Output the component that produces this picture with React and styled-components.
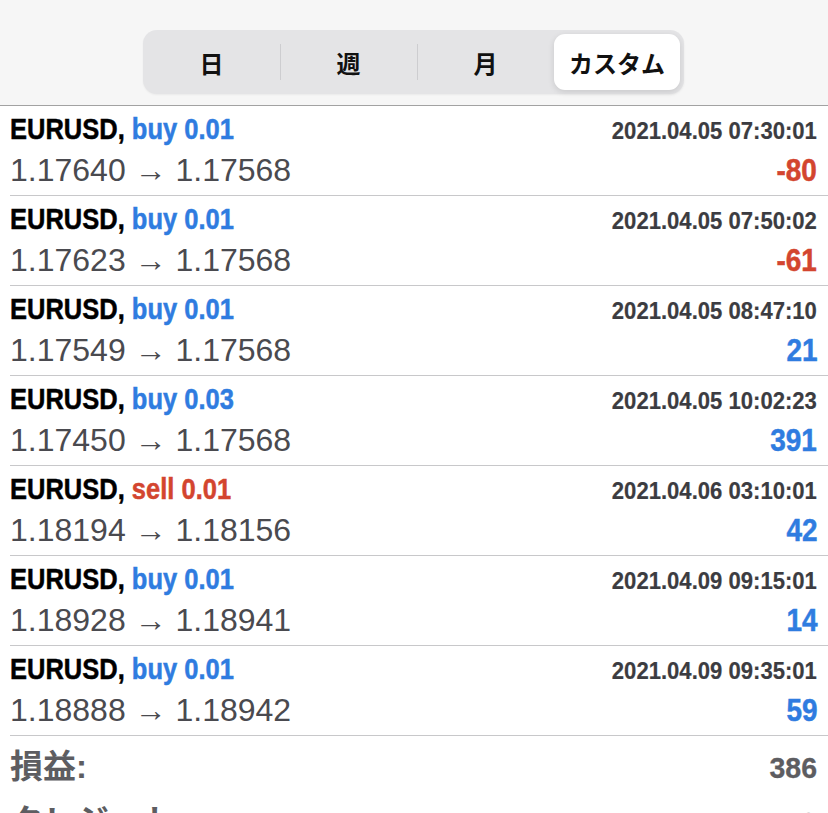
import React from 'react'
import styled, { createGlobalStyle } from 'styled-components'

const GlobalStyle = createGlobalStyle`
  html, body { margin: 0; padding: 0; background: #ffffff; }
  body { font-family: "Liberation Sans", Arial, sans-serif; }
`

const Page = styled.div`
  width: 828px;
  height: 813px;
  overflow: hidden;
  background: #ffffff;
`

const Header = styled.div`
  height: 106px;
  background: #f6f6f6;
  border-bottom: 1px solid #a2a2a2;
  display: flex;
  justify-content: center;
  align-items: flex-start;
  padding: 30px 2px 0 0;
  box-sizing: border-box;
`

const Segmented = styled.div`
  width: 541px;
  height: 64px;
  background: #e4e4e6;
  border-radius: 14px;
  display: flex;
  align-items: center;
  padding: 4px 4px 4px 0;
  box-sizing: border-box;
  box-shadow: 0 1px 2px rgba(0, 0, 0, 0.05);
`

const Segment = styled.div`
  flex: ${p => (p.active ? '0 0 125px' : '1')};
  height: ${p => (p.active ? '56px' : '36px')};
  display: flex;
  align-items: center;
  justify-content: center;
  font-family: "Noto Sans CJK JP", sans-serif;
  font-weight: 700;
  font-size: 24px;
  color: #111111;
  background: ${p => (p.active ? '#ffffff' : 'transparent')};
  border-radius: ${p => (p.active ? '11px' : '0')};
  box-shadow: ${p => (p.active ? '0 2px 6px rgba(0,0,0,0.12)' : 'none')};
  border-left: 1px solid ${p => (p.divider ? '#cdcdd0' : 'transparent')};
`

const List = styled.div`
  display: flex;
  flex-direction: column;
`

const Row = styled.div`
  height: 89px;
  margin-left: 10px;
  padding-right: 11px;
  border-bottom: 1px solid #c8c8ca;
  display: flex;
  flex-direction: column;
`

const Line = styled.div`
  display: flex;
  justify-content: space-between;
  align-items: baseline;
  height: ${p => p.h}px;
  padding-top: ${p => p.pt}px;
  box-sizing: border-box;
`

const Condensed = styled.span`
  font-family: "Liberation Sans", Arial, sans-serif;
  font-weight: 700;
  line-height: 1;
  white-space: nowrap;
  -webkit-text-stroke: ${p => p.stroke || 0}px currentColor;
  transform: scaleX(${p => p.sx || 0.85});
  transform-origin: ${p => (p.right ? 'right' : 'left')} center;
`

const Symbol = styled(Condensed)`
  font-size: 30px;
  color: #000000;
`

const Side = styled.span`
  color: ${p => (p.sell ? '#d3452f' : '#2f7ce0')};
`

const Time = styled(Condensed)`
  font-size: 24px;
  color: #3c3c41;
`

const Prices = styled.span`
  font-family: "Liberation Sans", Arial, sans-serif;
  font-size: 32px;
  line-height: 1;
  color: #4a4a4f;
  white-space: nowrap;
`

const Profit = styled(Condensed)`
  font-size: 31px;
  color: ${p => (p.loss ? '#d3452f' : '#2f7ce0')};
`

const Summary = styled.div`
  margin: 0 11px 0 10px;
  display: flex;
  flex-direction: column;
`

const SummaryRow = styled.div`
  display: flex;
  justify-content: space-between;
  align-items: baseline;
  height: 55px;
  padding-top: 14px;
  box-sizing: border-box;
  color: #5d5d61;
`

const Label = styled.span`
  font-family: "Liberation Sans", "Noto Sans CJK JP", sans-serif;
  font-weight: 700;
  font-size: 33px;
  line-height: 1;
  white-space: nowrap;
`

const Amount = styled(Condensed)`
  font-size: 30px;
`

const trades = [
  { side: 'buy', lot: '0.01', open: '1.17640', close: '1.17568', time: '2021.04.05 07:30:01', profit: '-80' },
  { side: 'buy', lot: '0.01', open: '1.17623', close: '1.17568', time: '2021.04.05 07:50:02', profit: '-61' },
  { side: 'buy', lot: '0.01', open: '1.17549', close: '1.17568', time: '2021.04.05 08:47:10', profit: '21' },
  { side: 'buy', lot: '0.03', open: '1.17450', close: '1.17568', time: '2021.04.05 10:02:23', profit: '391' },
  { side: 'sell', lot: '0.01', open: '1.18194', close: '1.18156', time: '2021.04.06 03:10:01', profit: '42' },
  { side: 'buy', lot: '0.01', open: '1.18928', close: '1.18941', time: '2021.04.09 09:15:01', profit: '14' },
  { side: 'buy', lot: '0.01', open: '1.18888', close: '1.18942', time: '2021.04.09 09:35:01', profit: '59' },
]

const tabs = ['日', '週', '月', 'カスタム']

export default function App() {
  return (
    <Page>
      <GlobalStyle />
      <Header>
        <Segmented>
          {tabs.map((t, i) => (
            <Segment key={t} active={i === 3} divider={i === 1 || i === 2}>
              {t}
            </Segment>
          ))}
        </Segmented>
      </Header>
      <List>
        {trades.map((tr, i) => (
          <Row key={i}>
            <Line h={45} pt={8}>
              <Symbol stroke={0.5}>
                EURUSD, <Side sell={tr.side === 'sell'}>{tr.side} {tr.lot}</Side>
              </Symbol>
              <Time right sx={0.92} stroke={0.2}>{tr.time}</Time>
            </Line>
            <Line h={44} pt={3}>
              <Prices>{tr.open} → {tr.close}</Prices>
              <Profit right sx={0.9} stroke={0.5} loss={tr.profit.startsWith('-')}>
                {tr.profit}
              </Profit>
            </Line>
          </Row>
        ))}
      </List>
      <Summary>
        <SummaryRow>
          <Label>損益:</Label>
          <Amount right sx={0.95} stroke={0.3}>386</Amount>
        </SummaryRow>
        <SummaryRow>
          <Label>クレジット:</Label>
          <Amount right sx={0.95} stroke={0.3}>0</Amount>
        </SummaryRow>
      </Summary>
    </Page>
  )
}
